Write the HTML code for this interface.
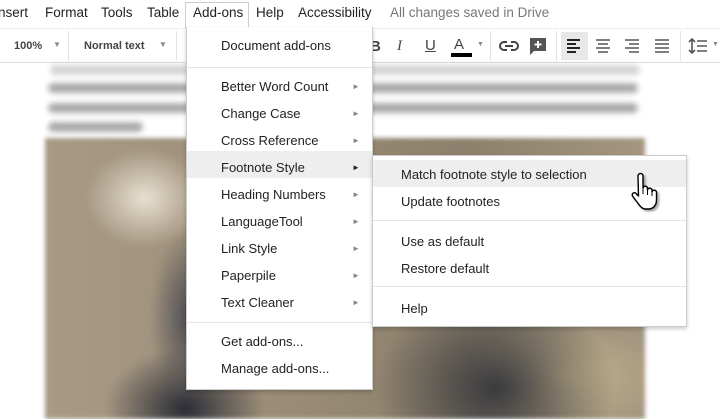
<!DOCTYPE html>
<html><head><meta charset="utf-8"><style>
*{margin:0;padding:0;box-sizing:border-box}
body{width:720px;height:419px;overflow:hidden;background:#fff;font-family:"Liberation Sans",Arial,sans-serif;position:relative;color:#222}
.menubar{position:absolute;left:0;top:0;width:720px;height:28px;font-size:13.5px}
.menubar span{position:absolute;top:5px}
.toolbar{position:absolute;left:0;top:28px;width:720px;height:35px;border-bottom:1px solid #ddd;border-top:1px solid #eee}
.sep{position:absolute;top:2px;width:1px;height:30px;background:#e3e3e3}
.blur{position:absolute;background:#aaa;border-radius:6px;filter:blur(3px);height:10px}
.img{position:absolute;left:45px;top:138px;width:600px;height:281px;background:
radial-gradient(ellipse 60px 50px at 100px 60px,#e8e0d0,transparent),
radial-gradient(ellipse 40px 90px at 145px 180px,#4a4a50,transparent),
radial-gradient(ellipse 80px 60px at 140px 270px,#2a2c35,transparent),
radial-gradient(ellipse 120px 100px at 450px 250px,#3a3a3e,transparent),
radial-gradient(ellipse 100px 60px at 520px 240px,#c8b890,transparent),
linear-gradient(90deg,#a89a85,#9a8c76 40%,#8c806c 70%,#a49680);filter:blur(2px)}
.menu{position:absolute;background:#fff;border:1px solid #ccc;box-shadow:0 2px 4px rgba(0,0,0,.2);font-size:13px;color:#222}
.it{position:absolute;left:34px}
.ar{position:absolute;left:165px;font-size:8px;color:#888}
.hl{position:absolute;background:#eee}
.hr{position:absolute;height:1px;background:#e5e5e5}
</style></head><body>
<div class="menubar">
<span style="left:-2px">nsert</span><span style="left:45px">Format</span><span style="left:101px">Tools</span><span style="left:147px">Table</span>
<div style="position:absolute;left:185px;top:2px;width:64px;height:26px;border:1px solid #ccc;border-bottom:none;background:#fff"></div>
<span style="left:193px">Add-ons</span><span style="left:256px">Help</span><span style="left:298px">Accessibility</span>
<span style="left:390px;color:#777">All changes saved in Drive</span>
</div>
<div class="toolbar">
<span style="position:absolute;left:14px;top:11px;font-size:11px;font-weight:bold;color:#444">100%</span><span style="position:absolute;left:53px;top:11px;font-size:8px;color:#888">▼</span>
<div class="sep" style="left:68px"></div>
<span style="position:absolute;left:84px;top:11px;font-size:11px;font-weight:bold;color:#444">Normal text</span><span style="position:absolute;left:159px;top:11px;font-size:8px;color:#888">▼</span>
<div class="sep" style="left:176px"></div>
<span style="position:absolute;left:370px;top:9px;font-size:15px;font-weight:bold;color:#444">B</span>
<span style="position:absolute;left:397px;top:9px;font-size:15px;font-style:italic;font-family:'Liberation Serif';color:#444">I</span>
<span style="position:absolute;left:425px;top:8px;font-size:15px;text-decoration:underline;color:#444">U</span>
<span style="position:absolute;left:454px;top:7px;font-size:15px;color:#444">A</span><div style="position:absolute;left:451px;top:24px;width:21px;height:4px;background:#000"></div><span style="position:absolute;left:477px;top:12px;font-size:7px;color:#888">▼</span>
<div class="sep" style="left:490px"></div>
<svg style="position:absolute;left:499px;top:10px" width="20" height="14"><path d="M8 3H5a4 4 0 0 0 0 8h3M12 3h3a4 4 0 0 1 0 8h-3M6 7h8" stroke="#444" stroke-width="2" fill="none"/></svg>
<svg style="position:absolute;left:529px;top:8px" width="18" height="18"><path d="M1 1h16v13H5l-4 4z" fill="#555"/><path d="M9 4v7M5.5 7.5h7" stroke="#fff" stroke-width="2"/></svg>
<div class="sep" style="left:556px"></div>
<div style="position:absolute;left:561px;top:3px;width:27px;height:28px;background:#e8e8e8"></div>
<svg style="position:absolute;left:566px;top:9px" width="16" height="16"><path d="M1 2h13M1 6h9M1 10h13M1 14h9" stroke="#222" stroke-width="2"/></svg>
<svg style="position:absolute;left:595px;top:9px" width="16" height="16"><path d="M1 2h14M3 6h10M1 10h14M3 14h10" stroke="#555" stroke-width="1.6"/></svg>
<svg style="position:absolute;left:624px;top:9px" width="16" height="16"><path d="M1 2h14M5 6h10M1 10h14M5 14h10" stroke="#555" stroke-width="1.6"/></svg>
<svg style="position:absolute;left:654px;top:9px" width="16" height="16"><path d="M1 2h14M1 6h14M1 10h14M1 14h14" stroke="#555" stroke-width="1.6"/></svg>
<div class="sep" style="left:680px"></div>
<svg style="position:absolute;left:688px;top:8px" width="22" height="18"><path d="M4 2v14M1 5l3-3 3 3M1 13l3 3 3-3M9 4h10M9 9h10M9 14h10" stroke="#555" stroke-width="1.6" fill="none"/></svg><span style="position:absolute;left:712px;top:12px;font-size:7px;color:#888">▼</span>
</div>
<div class="blur" style="left:50px;top:65px;width:590px;opacity:.5"></div>
<div class="blur" style="left:48px;top:83px;width:590px"></div>
<div class="blur" style="left:48px;top:103px;width:590px"></div>
<div class="blur" style="left:48px;top:122px;width:95px"></div>
<div class="img"></div>
<div class="menu" style="left:186px;top:27px;width:187px;height:363px;border-top:none">
<span class="it" style="top:11px">Document add-ons</span>
<div class="hr" style="left:0;top:40px;width:185px"></div>
<span class="it" style="top:52px">Better Word Count</span><span class="ar" style="top:55px">►</span>
<span class="it" style="top:79px">Change Case</span><span class="ar" style="top:82px">►</span>
<span class="it" style="top:106px">Cross Reference</span><span class="ar" style="top:109px">►</span>
<div class="hl" style="left:0;top:124px;width:185px;height:27px"></div>
<span class="it" style="top:133px">Footnote Style</span><span class="ar" style="top:136px;color:#222">►</span>
<span class="it" style="top:160px">Heading Numbers</span><span class="ar" style="top:163px">►</span>
<span class="it" style="top:187px">LanguageTool</span><span class="ar" style="top:190px">►</span>
<span class="it" style="top:214px">Link Style</span><span class="ar" style="top:217px">►</span>
<span class="it" style="top:241px">Paperpile</span><span class="ar" style="top:244px">►</span>
<span class="it" style="top:268px">Text Cleaner</span><span class="ar" style="top:271px">►</span>
<div class="hr" style="left:0;top:295px;width:185px"></div>
<span class="it" style="top:307px">Get add-ons...</span>
<span class="it" style="top:334px">Manage add-ons...</span>
</div>
<div class="menu" style="left:372px;top:155px;width:315px;height:172px">
<div class="hl" style="left:0;top:4px;width:313px;height:27px"></div>
<span class="it" style="left:28px;top:11px">Match footnote style to selection</span>
<span class="it" style="left:28px;top:38px">Update footnotes</span>
<div class="hr" style="left:0;top:64px;width:313px"></div>
<span class="it" style="left:28px;top:78px">Use as default</span>
<span class="it" style="left:28px;top:105px">Restore default</span>
<div class="hr" style="left:0;top:130px;width:313px"></div>
<span class="it" style="left:28px;top:145px">Help</span>
</div>
<svg style="position:absolute;left:628px;top:172px" width="34" height="40"><path d="M10 4a2.5 2.5 0 0 1 5 0v12a2.3 2.3 0 0 1 4.5 0v2a2.3 2.3 0 0 1 4.5 0v2a2.3 2.3 0 0 1 4.5 0v8c0 5-3 9-8 9h-3c-3 0-5-2-7-5l-6-8c-1-2 1-4 3-3l3 3z" fill="#fff" stroke="#000" stroke-width="1.4" stroke-linejoin="round" style="filter:drop-shadow(2px 2px 1px rgba(0,0,0,.35))"/><path d="M15 16v6M19.5 18v5M24 20v4" stroke="#000" stroke-width="1"/></svg>
</body></html>
